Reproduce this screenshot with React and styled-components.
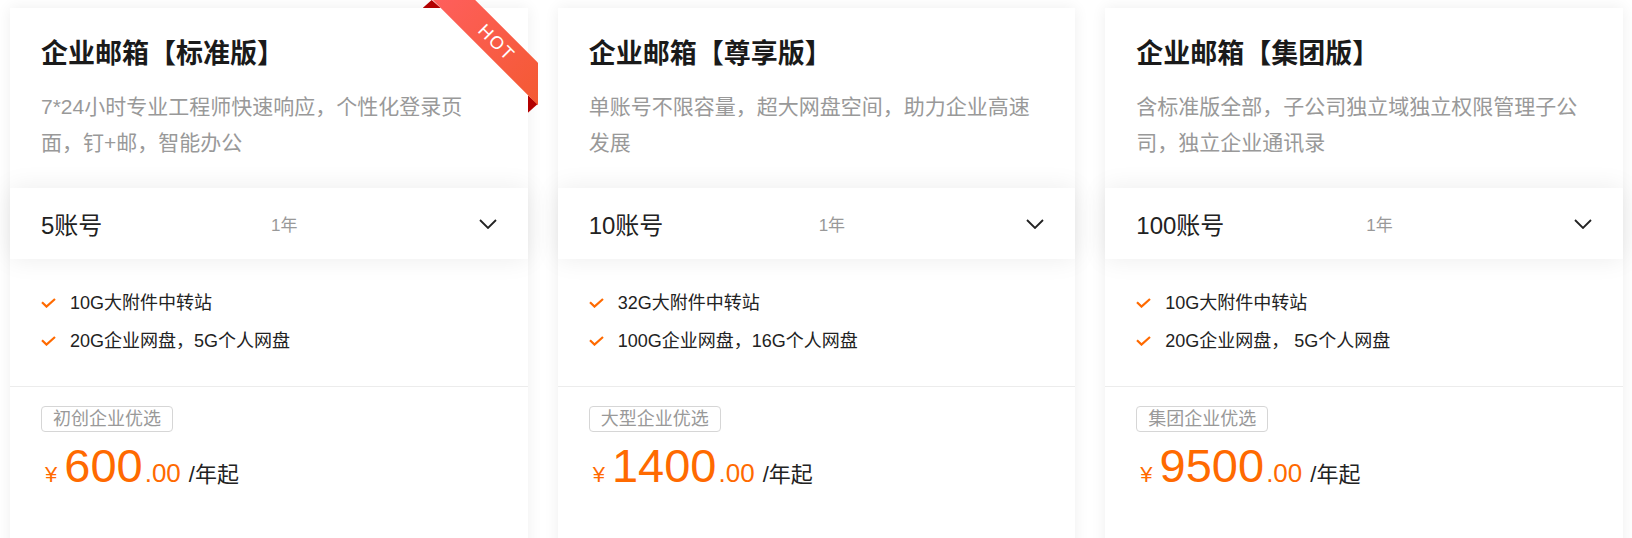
import styled, { createGlobalStyle, css } from "styled-components"

const GlobalStyle = createGlobalStyle`
  html, body {
    margin: 0;
    padding: 0;
    background: #fff;
  }
  body {
    font-family: "Liberation Sans", "Noto Sans CJK SC", sans-serif;
    overflow: hidden;
  }
`

const plans = [
  {
    name: "企业邮箱【标准版】",
    desc: "7*24小时专业工程师快速响应，个性化登录页面，钉+邮，智能办公",
    accounts: "5账号",
    period: "1年",
    features: ["10G大附件中转站", "20G企业网盘，5G个人网盘"],
    tag: "初创企业优选",
    price: "600",
    hot: true,
  },
  {
    name: "企业邮箱【尊享版】",
    desc: "单账号不限容量，超大网盘空间，助力企业高速发展",
    accounts: "10账号",
    period: "1年",
    features: ["32G大附件中转站", "100G企业网盘，16G个人网盘"],
    tag: "大型企业优选",
    price: "1400",
  },
  {
    name: "企业邮箱【集团版】",
    desc: "含标准版全部，子公司独立域独立权限管理子公司，独立企业通讯录",
    accounts: "100账号",
    period: "1年",
    features: ["10G大附件中转站", "20G企业网盘， 5G个人网盘"],
    tag: "集团企业优选",
    price: "9500",
  },
]

const Page = styled.div`
  display: grid;
  grid-template-columns: repeat(3, 1fr);
  gap: 30px;
  padding: 8px 9px 0 10px;
`

const Card = styled.div`
  position: relative;
  min-height: 560px;
  background: #fff;
  box-shadow: 0 0 14px rgba(0, 0, 0, 0.07);
`

const Header = styled.div`
  padding: 28px 31px 27px;
`

const Title = styled.h3`
  margin: 0;
  font-size: 27px;
  line-height: 36px;
  font-weight: 700;
  color: #1a1a1a;
`

const Desc = styled.p`
  margin: 17px 0 0;
  width: 442px;
  font-size: 21px;
  line-height: 36px;
  color: #999;
`

const Picker = styled.div`
  display: grid;
  grid-template-columns: 230px 1fr auto;
  align-items: center;
  height: 71px;
  padding: 0 31px;
  background: #fff;
  box-shadow: 0 0 26px rgba(0, 0, 0, 0.08);
`

const Accounts = styled.span`
  font-size: 24px;
  color: #222;
`

const Period = styled.span`
  font-size: 17px;
  color: #999;
`

const Features = styled.ul`
  margin: 0;
  padding: 25px 31px 26px;
  list-style: none;
  border-bottom: 1px solid #ececec;
`

const Feature = styled.li`
  display: flex;
  align-items: center;
  gap: 14px;
  font-size: 18px;
  line-height: 38px;
  color: #222;
`

const PriceBox = styled.div`
  padding: 19px 31px 0;
`

const Tag = styled.span`
  display: inline-block;
  padding: 0 11px;
  border: 1px solid #d6d6d6;
  border-radius: 4px;
  font-size: 18px;
  line-height: 24px;
  color: #999;
`

const Price = styled.div`
  display: flex;
  align-items: baseline;
  margin-top: 10px;
  color: #ff6a00;
  line-height: 1;
`

const Currency = styled.span`
  font-size: 22px;
  margin: 0 7px 0 4px;
`

const Amount = styled.span`
  font-size: 47px;
`

const Cents = styled.span`
  font-size: 26px;
  margin-left: 2px;
`

const Unit = styled.span`
  font-size: 22px;
  color: #222;
  margin-left: 8px;
`

const Ribbon = styled.div`
  position: absolute;
  top: -8px;
  right: -10px;
  width: 115px;
  height: 115px;
  overflow: hidden;
  pointer-events: none;
`

const RibbonFold = styled.i`
  position: absolute;
  background: #b20000;
  ${(p) =>
    p.$side === "top"
      ? css`
          left: 0;
          top: 0;
          width: 18px;
          height: 8px;
          clip-path: polygon(0 100%, 50% 0, 100% 100%);
        `
      : css`
          right: 0;
          top: 95px;
          width: 10px;
          height: 18px;
          clip-path: polygon(0 0, 100% 50%, 0 100%);
        `}
`

const RibbonBand = styled.span`
  position: absolute;
  left: -12px;
  top: 27px;
  width: 170px;
  height: 30px;
  line-height: 30px;
  text-align: center;
  transform: rotate(45deg);
  background: linear-gradient(to right, #ff5f5f, #f3592f);
  color: #fff;
  font-size: 18px;
  letter-spacing: 2px;
  text-indent: 2px;
`

const Chevron = () => (
  <svg width="18" height="10" viewBox="0 0 18 10" fill="none">
    <polyline points="1,1 9,9 17,1" stroke="#222" strokeWidth="1.8" />
  </svg>
)

const Check = () => (
  <svg width="15" height="10" viewBox="0 0 15 10" fill="none">
    <polyline points="1,4.2 5.5,8.6 14,1" stroke="#ff6a00" strokeWidth="2.2" />
  </svg>
)

const PlanCard = ({ plan }) => (
  <Card>
    <Header>
      <Title>{plan.name}</Title>
      <Desc>{plan.desc}</Desc>
    </Header>
    <Picker>
      <Accounts>{plan.accounts}</Accounts>
      <Period>{plan.period}</Period>
      <Chevron />
    </Picker>
    <Features>
      {plan.features.map((f) => (
        <Feature key={f}>
          <Check />
          {f}
        </Feature>
      ))}
    </Features>
    <PriceBox>
      <Tag>{plan.tag}</Tag>
      <Price>
        <Currency>¥</Currency>
        <Amount>{plan.price}</Amount>
        <Cents>.00</Cents>
        <Unit>/年起</Unit>
      </Price>
    </PriceBox>
    {plan.hot && (
      <Ribbon>
        <RibbonFold $side="top" />
        <RibbonFold $side="right" />
        <RibbonBand>HOT</RibbonBand>
      </Ribbon>
    )}
  </Card>
)

export default function App() {
  return (
    <>
      <GlobalStyle />
      <Page>
        {plans.map((p) => (
          <PlanCard key={p.name} plan={p} />
        ))}
      </Page>
    </>
  )
}
